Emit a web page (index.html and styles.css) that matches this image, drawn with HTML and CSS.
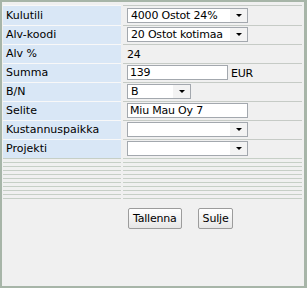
FILE: index.html
```html
<!DOCTYPE html>
<html>
<head>
    <title>Kulu</title>
    <link rel="stylesheet" href="styles.css">
</head>
<body>
    <div class="window">
        <div class="form">
            <div class="label">Kulutili</div>
            <div class="value"><div class="select w-wide"><span class="text">4000 Ostot 24%</span><span class="arrow"></span></div></div>

            <div class="label">Alv-koodi</div>
            <div class="value"><div class="select w-wide"><span class="text">20 Ostot kotimaa</span><span class="arrow"></span></div></div>

            <div class="label">Alv %</div>
            <div class="value"><span class="plain">24</span></div>

            <div class="label">Summa</div>
            <div class="value"><div class="input w-sum">139</div><span class="unit">EUR</span></div>

            <div class="label">B/N</div>
            <div class="value"><div class="select w-short"><span class="text">B</span><span class="arrow"></span></div></div>

            <div class="label">Selite</div>
            <div class="value"><div class="input w-wide">Miu Mau Oy 7</div></div>

            <div class="label">Kustannuspaikka</div>
            <div class="value"><div class="select w-wide"><span class="text"></span><span class="arrow"></span></div></div>

            <div class="label">Projekti</div>
            <div class="value"><div class="select w-wide"><span class="text"></span><span class="arrow"></span></div></div>
        </div>

        <div class="filler">
            <div></div><div></div>
            <div></div><div></div>
            <div></div><div></div>
            <div></div><div></div>
            <div></div><div></div>
            <div></div><div></div>
            <div></div><div></div>
            <div></div><div></div>
            <div></div><div></div>
            <div></div><div></div>
            <div></div><div></div>
        </div>

        <div class="actions">
            <button class="button">Tallenna</button>
            <button class="button">Sulje</button>
        </div>
    </div>
</body>
</html>
```

FILE: styles.css
```css
html, body {
    margin: 0;
    padding: 0;
}
body {
    font-family: 'DejaVu Sans', Verdana, sans-serif;
    font-size: 11px;
    color: #000;
}
.window {
    box-sizing: border-box;
    width: 307px;
    height: 288px;
    background: #f0f0f0;
    border: 2px solid #a7b5a8;
    border-right-width: 3px;
    padding: 3px 0 0 1px;
}
.form {
    display: grid;
    grid-template-columns: 118px 179px;
    column-gap: 2px;
}
.label {
    box-sizing: border-box;
    height: 19px;
    border-top: 1px solid #f8f8f8;
    background: #d9e7f6;
    padding: 2px 0 0 3px;
}
.value {
    box-sizing: border-box;
    height: 19px;
    border-top: 1px solid #c6cbc6;
    padding: 1px 0 0 4px;
    display: flex;
    align-items: flex-start;
    letter-spacing: -0.2px;
}
.label:first-child,
.label:first-child + .value {
    height: 20px;
    padding-top: 3px;
}
.label:first-child + .value {
    padding-top: 2px;
}
.select,
.input {
    box-sizing: border-box;
    height: 15px;
    border: 1px solid #a3a8ae;
    background: #fff;
    display: flex;
    line-height: 13px;
}
.select .text {
    flex: 1;
    padding: 0 0 0 3px;
    white-space: nowrap;
    overflow: hidden;
}
.select .arrow {
    width: 17px;
    background: #f3f3f3;
    position: relative;
}
.select .arrow::after {
    content: "";
    position: absolute;
    left: 6px;
    top: 5px;
    border-left: 3px solid transparent;
    border-right: 3px solid transparent;
    border-top: 3px solid #000;
}
.input {
    padding: 0 0 0 2px;
}
.w-wide {
    width: 121px;
}
.w-short {
    width: 64px;
}
.w-sum {
    width: 101px;
}
.plain {
    padding-top: 2px;
}
.unit {
    padding: 2px 0 0 3px;
}
.filler {
    display: grid;
    grid-template-columns: 118px 179px;
    column-gap: 2px;
}
.filler div {
    height: 3px;
    border-top: 1px solid #c6cfc6;
}
.actions {
    display: flex;
    gap: 16px;
    padding: 6px 0 0 125px;
}
.button {
    font-family: 'DejaVu Sans', Verdana, sans-serif;
    font-size: 11px;
    letter-spacing: -0.2px;
    height: 21px;
    padding: 0 4px;
    border: 1px solid #9c9c9c;
    border-radius: 2px;
    background: linear-gradient(#ffffff, #e6e6e6);
    color: #000;
    margin: 0;
}
```
